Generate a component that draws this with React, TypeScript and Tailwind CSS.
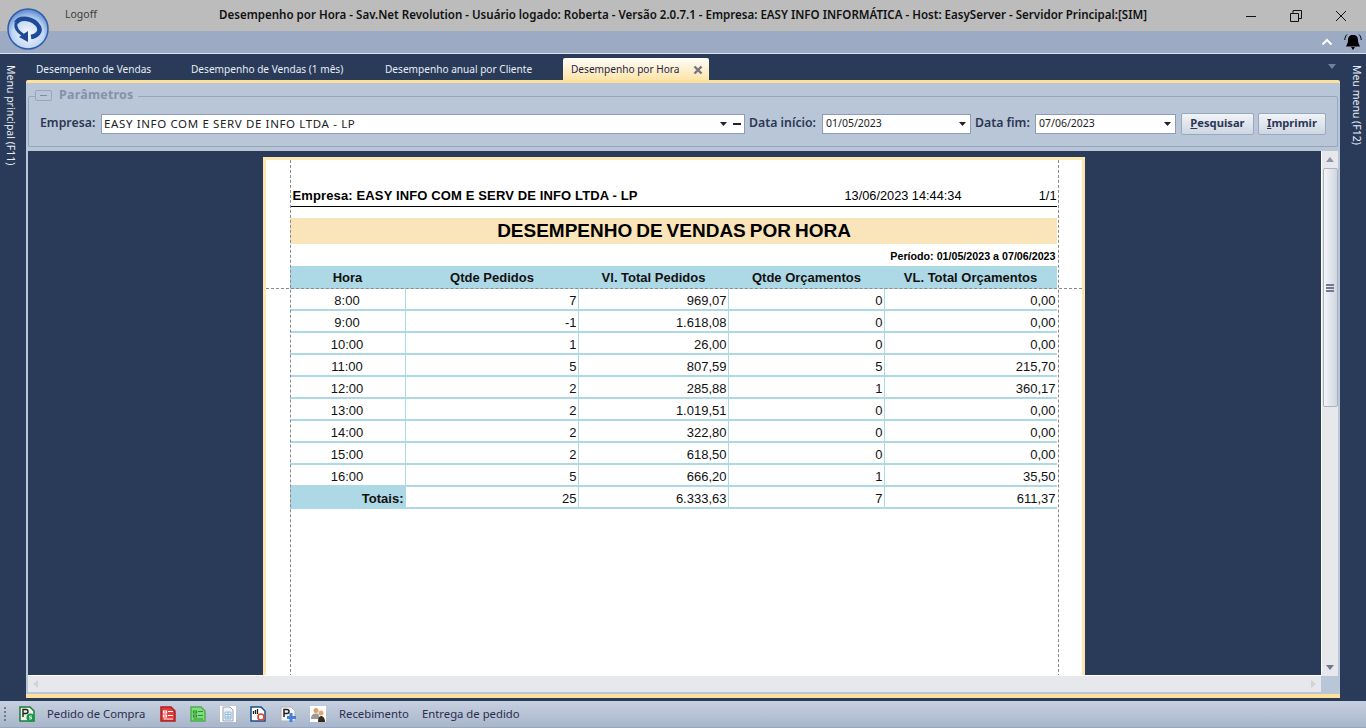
import type { ReactNode } from "react";

const ui = "font-['Noto_Sans','DejaVu_Sans',sans-serif]";
const report = "font-['Liberation_Sans',Arial,sans-serif]";

const ROWS = [
  ["8:00", "7", "969,07", "0", "0,00"],
  ["9:00", "-1", "1.618,08", "0", "0,00"],
  ["10:00", "1", "26,00", "0", "0,00"],
  ["11:00", "5", "807,59", "5", "215,70"],
  ["12:00", "2", "285,88", "1", "360,17"],
  ["13:00", "2", "1.019,51", "0", "0,00"],
  ["14:00", "2", "322,80", "0", "0,00"],
  ["15:00", "2", "618,50", "0", "0,00"],
  ["16:00", "5", "666,20", "1", "35,50"],
];

const COLS = "grid grid-cols-[116px_173px_150px_156px_172px]";

function Logo() {
  return (
    <svg viewBox="0 0 42 42" className="absolute left-[7px] top-[8px] w-[42px] h-[42px]">
      <defs>
        <radialGradient id="lg" cx="50%" cy="62%" r="60%">
          <stop offset="0%" stopColor="#f6f9fe" />
          <stop offset="65%" stopColor="#bfd5f4" />
          <stop offset="100%" stopColor="#5d8ad0" />
        </radialGradient>
      </defs>
      <circle cx="21" cy="21" r="20" fill="url(#lg)" stroke="#2f5ea8" strokeWidth="1.5" />
      <path d="M9 15C13 8 27 10 32 19c2 5-2 9-8 10" fill="none" stroke="#1c4a96" strokeWidth="4.500" />
      <path d="M9 15c-1 5 2 9 7 12" fill="none" stroke="#1c4a96" strokeWidth="3" />
      <path d="M12 29l9-6 0 11z" fill="#1c4a96" />
    </svg>
  );
}

function WindowControls() {
  return (
    <div className="flex items-center ml-auto mr-[19px] gap-[33px]">
      <svg viewBox="0 0 12 12" className="w-[12px] h-[12px]"><path d="M1 6.500h10" stroke="#111" fill="none" /></svg>
      <svg viewBox="0 0 12 12" className="w-[12px] h-[12px]"><path d="M.5 3.500h8v8h-8zM3 3.500V.5h8.500v8H8.500" stroke="#111" fill="none" /></svg>
      <svg viewBox="0 0 12 12" className="w-[12px] h-[12px]"><path d="M1 1l10 10M11 1 1 11" stroke="#111" fill="none" /></svg>
    </div>
  );
}

function Bell() {
  return (
    <svg viewBox="0 0 18 18" className="w-[18px] h-[18px]">
      <path d="M9 2c3.500 0 5 2 5 5 0 3 1 4 2 6.500H2C3 11 4 10 4 7c0-3 1.500-5 5-5z" fill="#000" />
      <path d="M7 14h4L9 17z" fill="#000" />
      <path d="M3 1.500C1.500 3 .8 5 .8 7M15 1.500C16.500 3 17.200 5 17.200 7" stroke="#000" fill="none" />
    </svg>
  );
}

function TopBars() {
  return (
    <div className="relative shrink-0">
      <div className={`h-[31px] bg-[#bcbcbc] flex items-center ${ui}`}>
        <span className="ml-[65px] mb-[1px] text-[#3d3d3d] text-[10.5px] w-[154px]">Logoff</span>
        <span className="mb-[2px] font-semibold text-[11.55px] text-[#111] whitespace-nowrap">
          Desempenho por Hora - Sav.Net Revolution - Usuário logado: Roberta - Versão 2.0.7.1 - Empresa: EASY INFO INFORMÁTICA - Host: EasyServer - Servidor Principal:[SIM]
        </span>
        <WindowControls />
      </div>
      <div className="h-[22px] bg-[#9cabc3] flex items-center justify-end pr-[4px] gap-[11px]">
        <svg viewBox="0 0 12 8" className="w-[12px] h-[8px]"><path d="M1.500 6.500 6 2l4.500 4.500" stroke="#fff" strokeWidth="2" fill="none" /></svg>
        <Bell />
      </div>
      <div className="h-px bg-[#dfe5ee]" />
      <Logo />
    </div>
  );
}

function Tabs() {
  const tabs = [
    { label: "Desempenho de Vendas", w: "w-[155px]" },
    { label: "Desempenho de Vendas (1 mês)", w: "w-[194px]" },
    { label: "Desempenho anual por Cliente", w: "w-[188px]" },
  ];
  return (
    <div className={`h-[26px] shrink-0 flex items-end text-[10.1px] ${ui} relative`}>
      {tabs.map((t) => (
        <div key={t.label} className={`${t.w} h-[22px] flex items-center pl-[10px] pt-[1px] text-[#e8edf5] whitespace-nowrap`}>{t.label}</div>
      ))}
      <div className="w-[146px] h-[22px] flex items-center pl-[8px] pt-[1px] rounded-t-[2px] bg-gradient-to-b from-[#fffdf7] to-[#fde4a8] text-[#22264f] whitespace-nowrap">
        Desempenho por Hora
        <svg viewBox="0 0 10 10" className="w-[10px] h-[10px] ml-auto mr-[6px]"><path d="M1.500 1.500l7 7M8.500 1.500l-7 7" stroke="#6f7785" strokeWidth="2.400" fill="none" /></svg>
      </div>
      <svg viewBox="0 0 8 5" className="absolute right-[4px] top-[10px] w-[8px] h-[5px]"><path d="M0 0h8L4 5z" fill="#6f80a0" /></svg>
    </div>
  );
}

function Select({ value, className, children }: { value: string; className: string; children?: ReactNode }) {
  return (
    <div className={`relative h-[20px] bg-white border border-[#8e9db6] flex items-center text-[#222] ${className}`}>
      <span className="whitespace-nowrap">{value}</span>
      <svg viewBox="0 0 7 4" className="w-[7px] h-[4px] ml-auto"><path d="M0 0h7L3.500 4z" fill="#222" /></svg>
      {children}
    </div>
  );
}

function Btn({ first, rest, className }: { first: string; rest: string; className: string }) {
  return (
    <div className={`h-[22px] rounded-[2px] border border-[#9aa8bd] bg-gradient-to-b from-[#f1f4f8] to-[#ced6e2] flex items-center justify-center text-[11.2px] font-bold text-[#2c3654] ${className}`}>
      <span className="underline">{first}</span>{rest}
    </div>
  );
}

function Params() {
  const label = "text-[12.3px] font-semibold text-[#2c3654] whitespace-nowrap";
  return (
    <div className={`relative shrink-0 mx-[2px] mt-[13px] h-[51px] border border-[#97a6ba] rounded-[2px] flex items-center pl-[11px] pt-[4px] ${ui}`}>
      <div className="absolute left-[6px] -top-[11px] flex items-center bg-[#b9c6d8] pr-[4px]">
        <div className="w-[17px] h-[11px] border border-[#97a6ba] rounded-[2px] flex items-center justify-center">
          <div className="w-[7px] h-px bg-[#7d8ba3]" />
        </div>
        <span className="ml-[7px] text-[12.5px] font-bold text-[#8492ab] tracking-[0.2px]">Parâmetros</span>
      </div>
      <span className={`${label} w-[61px]`}>Empresa:</span>
      <Select value="EASY INFO COM E SERV DE INFO LTDA - LP" className="w-[644px] pl-[2px] pr-[17px] text-[11.5px] tracking-[0.63px]">
        <div className="absolute right-[3px] top-[8px] w-[8px] h-[2px] bg-[#222]" />
      </Select>
      <span className={`${label} ml-[4px] w-[73px]`}>Data início:</span>
      <Select value="01/05/2023" className="w-[149px] pl-[3px] pr-[4px] text-[10.5px]" />
      <span className={`${label} ml-[4px] w-[60px]`}>Data fim:</span>
      <Select value="07/06/2023" className="w-[141px] pl-[3px] pr-[4px] text-[10.5px]" />
      <Btn first="P" rest="esquisar" className="w-[73px] ml-[5px]" />
      <Btn first="I" rest="mprimir" className="w-[68px] ml-[4px]" />
    </div>
  );
}

function Row({ cells, total }: { cells: string[]; total?: boolean }) {
  return (
    <div className={`${COLS} h-[22px] text-[13px] text-[#111] border-b-2 border-[#add8e6]`}>
      <div className={`flex items-center pt-[2px] border-r border-[#add8e6] ${total ? "bg-[#add8e6] justify-end font-bold pr-[1px]" : "justify-center"}`}>{cells[0]}</div>
      {cells.slice(1).map((c, i) => (
        <div key={i} className={`flex items-center justify-end pt-[2px] pr-[1px] ${i < 3 ? "border-r border-[#add8e6]" : ""}`}>{c}</div>
      ))}
    </div>
  );
}

function Paper() {
  return (
    <div className={`relative w-[822px] h-[530px] mx-auto mt-[6px] -translate-x-[1px] bg-white border-x-[3px] border-t-[3px] border-[#fbe7b0] pl-[24px] pt-[27px] ${report}`}>
      <div className="w-[767px]">
        <div className="h-[20px] flex items-center border-b border-black text-black pl-[3px] pb-[1px]">
          <span className="font-bold text-[13px] tracking-[0.13px] whitespace-nowrap">Empresa: EASY INFO COM E SERV DE INFO LTDA - LP</span>
          <span className="ml-auto w-[137px] text-[12.75px]">13/06/2023 14:44:34</span>
          <span className="w-[75px] text-right text-[12.75px]">1/1</span>
        </div>
        <div className="mt-[11px] h-[26px] bg-[#fae5bb] flex items-center justify-center text-[19px] font-bold text-black [word-spacing:-1.3px] pl-[2px]">
          DESEMPENHO DE VENDAS POR HORA
        </div>
        <div className="h-[22px] flex items-center justify-end text-[10.7px] font-bold text-black pr-[1px] pt-[2px]">
          Período: 01/05/2023 a 07/06/2023
        </div>
        <div className={`${COLS} h-[23px] bg-[#add8e6] text-[13px] font-bold text-[#111] items-center text-center`}>
          <span>Hora</span>
          <span>Qtde Pedidos</span>
          <span>Vl. Total Pedidos</span>
          <span>Qtde Orçamentos</span>
          <span>VL. Total Orçamentos</span>
        </div>
        {ROWS.map((r) => <Row key={r[0]} cells={r} />)}
        <Row total cells={["Totais:", "25", "6.333,63", "7", "611,37"]} />
      </div>
      <div className="absolute left-[24px] top-0 bottom-0 border-l border-dashed border-[#8a8a8a]" />
      <div className="absolute left-[792px] top-0 bottom-0 border-l border-dashed border-[#8a8a8a]" />
      <div className="absolute left-0 right-0 top-[128px] border-t border-dashed border-[#8a8a8a]" />
    </div>
  );
}

function VScroll() {
  return (
    <div className="w-[17px] shrink-0 bg-[#e6e8eb] border-l border-white flex flex-col items-center">
      <svg viewBox="0 0 8 5" className="w-[8px] h-[5px] mt-[6px]"><path d="M4 0l4 5H0z" fill="#8c97a8" /></svg>
      <div className="mt-[6px] w-[15px] h-[239px] rounded-[2px] border border-[#aab3c0] bg-gradient-to-r from-[#f4f6f8] to-[#ced6e0] flex flex-col items-center justify-center gap-[1px]">
        <div className="w-[8px] h-[2px] bg-[#6f7a8c]" />
        <div className="w-[8px] h-[2px] bg-[#6f7a8c]" />
        <div className="w-[8px] h-[2px] bg-[#6f7a8c]" />
      </div>
      <svg viewBox="0 0 8 5" className="w-[8px] h-[5px] mt-auto mb-[6px]"><path d="M0 0h8L4 5z" fill="#6f7a8c" /></svg>
    </div>
  );
}

function Viewer() {
  return (
    <div className="flex-1 min-h-0 flex flex-col mt-[4px] mb-[2px] mx-[2px]">
      <div className="flex-1 min-h-0 flex">
        <div className="flex-1 min-w-0 bg-[#2a3b5a] overflow-hidden border-b border-white">
          <Paper />
        </div>
        <VScroll />
      </div>
      <div className="h-[16px] shrink-0 flex mr-[17px] bg-[#e6e8eb] items-center justify-between px-[5px]">
        <svg viewBox="0 0 5 8" className="w-[5px] h-[8px]"><path d="M5 0v8L0 4z" fill="#cfd4da" /></svg>
        <svg viewBox="0 0 5 8" className="w-[5px] h-[8px]"><path d="M0 0v8l5-4z" fill="#cfd4da" /></svg>
      </div>
    </div>
  );
}

function Doc({ children, bg, frame }: { children?: ReactNode; bg: string; frame: string }) {
  return (
    <svg viewBox="0 0 16 16" className="w-[16px] h-[16px]">
      <path d="M1 1h10l4 4v10H1z" fill={bg} stroke={frame} strokeWidth="1.500" />
      {children}
    </svg>
  );
}

function FormLines({ c }: { c: string }) {
  return (
    <path d="M3.500 5h3v2h-3zM3.500 9h3v2h-3zM8 5.500h5M8 9.500h5M3.500 13h9.500" fill="none" stroke={c} strokeWidth="1.200" />
  );
}

function StatusBar() {
  return (
    <div className={`h-[27px] shrink-0 bg-gradient-to-b from-[#c6d0e0] to-[#a9b6cb] border-b border-[#97a5bd] flex items-center text-[11.3px] text-[#2c2c50] ${ui}`}>
      <div className="ml-[4px] flex flex-col gap-[2px] w-[2px]">
        <div className="h-[2px] bg-[#6f7a8c]" />
        <div className="h-[2px] bg-[#6f7a8c]" />
        <div className="h-[2px] bg-[#6f7a8c]" />
        <div className="h-[2px] bg-[#6f7a8c]" />
      </div>
      <div className="ml-[13px]">
        <svg viewBox="0 0 16 16" className="w-[16px] h-[16px]">
          <path d="M1 1h10l4 4v10H1z" fill="#e9f3e6" stroke="#1f7a3c" strokeWidth="1.500" />
          <path d="M4 11V3.500h3a2 2 0 0 1 0 4H4" fill="none" stroke="#222" strokeWidth="1.400" />
          <circle cx="11.500" cy="11.500" r="4" fill="#169a44" />
          <path d="M10 13h2.500v-1.500H10.500V10H13" fill="none" stroke="#fff" strokeWidth="0.800" />
        </svg>
      </div>
      <span className="ml-[12px] w-[113px] whitespace-nowrap">Pedido de Compra</span>
      <Doc bg="#e23c3c" frame="#b02020"><FormLines c="#fff" /></Doc>
      <div className="ml-[14px]"><Doc bg="#7fdc7f" frame="#4cb04c"><FormLines c="#2f8f2f" /></Doc></div>
      <div className="ml-[14px]">
        <svg viewBox="0 0 16 16" className="w-[16px] h-[16px]">
          <path d="M0 0h16v16H0z" fill="#fff" />
          <path d="M3 1h7l3 3v11H3z" fill="#eef2f6" stroke="#9aa3ad" />
          <path d="M5 6h6v7H5zM5 8.500h6M5 11h6M8 6v7" fill="none" stroke="#6fa8d8" strokeWidth="0.700" />
        </svg>
      </div>
      <div className="ml-[14px]">
        <svg viewBox="0 0 16 16" className="w-[16px] h-[16px]">
          <path d="M1 1h10l4 4v10H1z" fill="#fff" stroke="#14508c" strokeWidth="1.500" />
          <path d="M3.500 8V5M5.500 8V4M7.500 8V3" stroke="#222" strokeWidth="1.300" />
          <circle cx="11" cy="11" r="3" fill="none" stroke="#e0402a" strokeWidth="1.600" />
        </svg>
      </div>
      <div className="ml-[14px]">
        <svg viewBox="0 0 16 16" className="w-[16px] h-[16px]">
          <path d="M1 1h10l4 4v10H1z" fill="#f3f3f3" stroke="#b5b5b5" />
          <path d="M4 11V3.500h3a2 2 0 0 1 0 4H4" fill="none" stroke="#222" strokeWidth="1.500" />
          <path d="M11 7v9M7 11.500h9" stroke="#3f80e0" strokeWidth="3" />
        </svg>
      </div>
      <div className="ml-[14px]">
        <svg viewBox="0 0 16 16" className="w-[16px] h-[16px]">
          <path d="M0 0h16v16H0z" fill="#fff" />
          <circle cx="6" cy="4.500" r="2.500" fill="#d9a06a" />
          <path d="M1 13c0-4 2-5.500 5-5.500s3 1 3 5.500z" fill="#9a9a9a" />
          <circle cx="11" cy="7" r="2.500" fill="#e0a878" />
          <path d="M8 16c0-4 1-6 3-6s4 2 4 6z" fill="#3a2a18" />
        </svg>
      </div>
      <span className="ml-[13px] w-[83px] whitespace-nowrap">Recebimento</span>
      <span className="whitespace-nowrap">Entrega de pedido</span>
    </div>
  );
}

function SideLabel({ text, className }: { text: string; className: string }) {
  return (
    <div className={`w-[26px] shrink-0 flex justify-center pt-[11px] text-[10.5px] text-[#e8edf5] ${ui} ${className}`}>
      <span className="[writing-mode:vertical-rl] whitespace-nowrap">{text}</span>
    </div>
  );
}

export default function App() {
  return (
    <div className="w-[1366px] h-[728px] overflow-hidden flex flex-col bg-[#2a3b5a]">
      <TopBars />
      <div className="flex-1 min-h-0 flex">
        <SideLabel text="Menu principal (F11)" className="pr-[6px]" />
        <div className="flex-1 min-w-0 flex flex-col pb-[3px]">
          <Tabs />
          <div className="flex-1 min-h-0 flex flex-col bg-[#b9c6d8] border-t-[3px] border-b-[4px] border-[#fde19b] rounded-t-[2px]">
            <Params />
            <Viewer />
          </div>
        </div>
        <SideLabel text="Meu menu (F12)" className="pl-[6px]" />
      </div>
      <StatusBar />
    </div>
  );
}
